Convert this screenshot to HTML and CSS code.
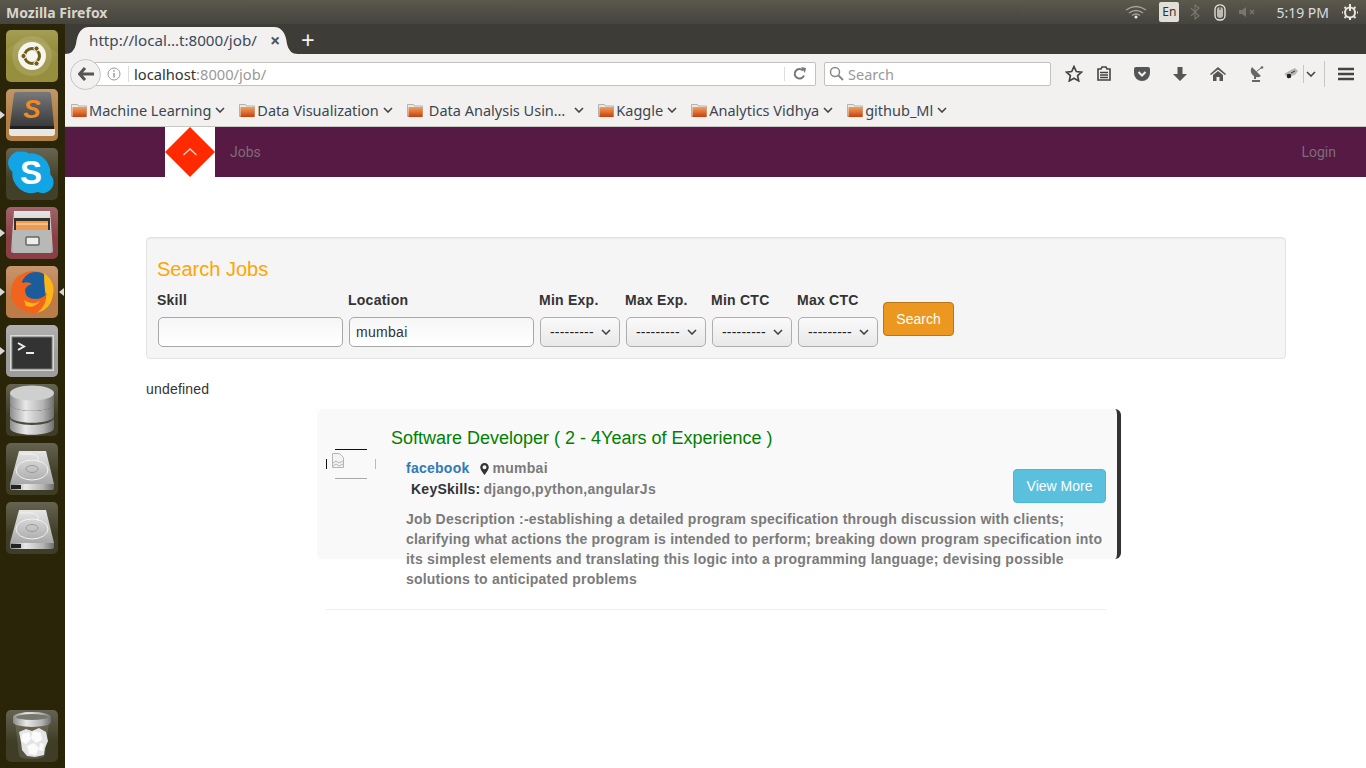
FILE: index.html
```html
<!DOCTYPE html>
<html>

<head>
    <meta charset="utf-8">
    <meta name="viewport" content="width=device-width, initial-scale=1.0">
    <title>Jobs</title>
    <link rel="stylesheet" href="styles.css">
</head>

<body>
    <svg class="svg_defs" aria-hidden="true">
        <defs>
            <linearGradient id="folder_g" x1="0" y1="0" x2="0" y2="1">
                <stop offset="0" stop-color="#f0a060" />
                <stop offset="1" stop-color="#c8400c" />
            </linearGradient>
            <linearGradient id="metal_g" x1="0" y1="0" x2="1" y2="0">
                <stop offset="0" stop-color="#8c8c8c" />
                <stop offset="0.35" stop-color="#e8e8e8" />
                <stop offset="0.75" stop-color="#b4b4b4" />
                <stop offset="1" stop-color="#6e6e6e" />
            </linearGradient>
            <linearGradient id="plate_g" x1="0" y1="0" x2="0" y2="1">
                <stop offset="0" stop-color="#e6e6e6" />
                <stop offset="1" stop-color="#a8a8a8" />
            </linearGradient>
            <linearGradient id="box_g" x1="0" y1="0" x2="0" y2="1">
                <stop offset="0" stop-color="#77787a" />
                <stop offset="1" stop-color="#3a3a3c" />
            </linearGradient>
            <symbol id="folder" viewBox="0 0 16 16">
                <path d="M0.5 2.5h6l1 1.500h8v10.500h-15z" fill="#ece9e4" stroke="#a8a49c" stroke-width="0.8" />
                <rect x="1.5" y="5" width="14" height="10" fill="url(#folder_g)" />
            </symbol>
            <symbol id="chev" viewBox="0 0 10 6">
                <path d="M1 1l4 4 4-4" fill="none" stroke="#444" stroke-width="1.6" />
            </symbol>
            <symbol id="hdd" viewBox="0 0 52 52">
                <path d="M13 8h27l8 33H4z" fill="url(#plate_g)" />
                <path d="M4 41h44v4a2 2 0 0 1-2 2H6a2 2 0 0 1-2-2z" fill="url(#metal_g)" />
                <rect x="5" y="42" width="10" height="4" fill="#222" />
                <ellipse cx="26" cy="27" rx="16" ry="10" fill="none" stroke="#f2f2f2" />
                <ellipse cx="26" cy="26" rx="6" ry="3.5" fill="none" stroke="#999" />
                <path d="M14 11h12q8 1 6 8" fill="none" stroke="#f2f2f2" />
            </symbol>
        </defs>
    </svg>

    <header class="top_bar">
        <span class="top_title">Mozilla Firefox</span>
        <div class="tray">
            <svg class="tray_wifi" width="22" height="14" viewBox="0 0 22 14">
                <path d="M1 5q10-7 20 0M4 8q7-5 14 0M7 10.5q4-3 8 0" fill="none" stroke="#a5a39b" stroke-width="1.3" />
                <circle cx="11" cy="12" r="1.5" fill="#eee" />
            </svg>
            <span class="tray_lang">En</span>
            <svg class="tray_bt" width="10" height="16" viewBox="0 0 10 16">
                <path d="M1 4l8 8-4 3V1l4 3-8 8" fill="none" stroke="#77756c" stroke-width="1.2" />
            </svg>
            <svg class="tray_mouse" width="12" height="17" viewBox="0 0 12 17">
                <rect x="1" y="1" width="10" height="15" rx="4.5" fill="none" stroke="#e8e6e0" stroke-width="1.3" />
                <rect x="3" y="3" width="6" height="11" rx="3" fill="#bdbbb4" />
                <path d="M6 1v5" stroke="#444" />
            </svg>
            <svg class="tray_sound" width="18" height="12" viewBox="0 0 18 12">
                <path d="M0 4h3l4-3v10l-4-3H0z" fill="#77756c" />
                <path d="M11 4l4 4m0-4l-4 4" stroke="#77756c" stroke-width="1.3" />
            </svg>
            <span class="tray_time">5:19 PM</span>
            <svg class="tray_power" width="16" height="16" viewBox="0 0 16 16">
                <circle cx="8" cy="8.5" r="5" fill="none" stroke="#e8e6e0" stroke-width="2" />
                <path d="M8 0v7" stroke="#e8e6e0" stroke-width="2" />
                <path d="M8 14v2M1 8.5h-1M16 8.5h-1M2.5 3l1.500 1.500M13.500 3L12 4.500M2.500 14l1.500-1.500M13.500 14L12 12.500" stroke="#e8e6e0" stroke-width="2" />
            </svg>
        </div>
    </header>

    <div class="desktop">
        <nav class="launcher">
            <div class="tile tile_ubuntu">
                <svg width="52" height="52" viewBox="0 0 52 52">
                    <path d="M0 20q26-22 52 4v28H0z" fill="#fff" opacity="0.08" />
                    <circle cx="26" cy="26" r="20" fill="#fff" opacity="0.12" />
                    <circle cx="26" cy="26" r="14" fill="#f7f5ee" />
                    <circle cx="26" cy="26" r="7.5" fill="none" stroke="#6e5e18" stroke-width="3" />
                    <circle cx="17.5" cy="26" r="2.6" fill="#6e5e18" stroke="#f7f5ee" />
                    <circle cx="30.5" cy="18.5" r="2.6" fill="#6e5e18" stroke="#f7f5ee" />
                    <circle cx="30.5" cy="33.5" r="2.6" fill="#6e5e18" stroke="#f7f5ee" />
                </svg>
            </div>
            <div class="tile tile_sublime pip_left">
                <svg width="52" height="52" viewBox="0 0 52 52">
                    <path d="M8 5q0-2 3-2h31q3 0 3 2l3 32H4z" fill="url(#box_g)" />
                    <path d="M4 37h44v3H4z" fill="#1f1f21" />
                    <path d="M3 40h46v4a3 3 0 0 1-3 3H6a3 3 0 0 1-3-3z" fill="#e9e6df" />
                    <text x="26" y="29" class="sublime_s">S</text>
                </svg>
            </div>
            <div class="tile tile_skype">
                <svg width="52" height="52" viewBox="0 0 52 52">
                    <g transform="translate(2 1) scale(0.88)">
                        <path d="M15 3a12 12 0 0 1 9 2 22 22 0 0 1 24 24 12 12 0 0 1-2 19 12 12 0 0 1-12 1A22 22 0 0 1 5 26 13 13 0 0 1 15 3z" fill="#12a5e6" />
                    </g>
                    <text x="25" y="36" class="skype_s">S</text>
                </svg>
            </div>
            <div class="tile tile_files pip_left">
                <svg width="52" height="52" viewBox="0 0 52 52">
                    <path d="M8 4h36l3 40a2 2 0 0 1-2 2H7a2 2 0 0 1-2-2z" fill="url(#plate_g)" />
                    <rect x="8" y="11" width="36" height="12" fill="#33302c" />
                    <rect x="10" y="14" width="32" height="9" fill="#ef9a4f" />
                    <path d="M10 17h32" stroke="#fbe3c4" stroke-width="1.2" />
                    <rect x="7" y="23" width="38" height="23" fill="#b8b8b6" />
                    <rect x="20" y="30" width="13" height="8" rx="1" fill="#eee" stroke="#666" stroke-width="1.5" />
                </svg>
            </div>
            <div class="tile tile_firefox pip_left">
                <svg width="52" height="52" viewBox="0 0 52 52">
                    <circle cx="27" cy="26" r="21" fill="#f1641e" />
                    <circle cx="30" cy="21" r="15" fill="#1b5d9c" />
                    <path d="M38 7q12 9 9 22-2 14-16 18 12-10 8-22-1-9-1-18z" fill="#fbb516" />
                    <path d="M5 30q-1-14 9-22-2 6 3 9 5-2 9 1-7 2-7 7 1 8 10 8 8 0 12-6-3 15-18 17Q8 45 5 30z" fill="#f1641e" />
                    <path d="M18 34q8 6 16 1-6 8-14 5z" fill="#fbb516" />
                </svg>
                <span class="pip_right"></span>
            </div>
            <div class="tile tile_terminal pip_left">
                <svg width="52" height="52" viewBox="0 0 52 52">
                    <rect x="4" y="10" width="44" height="36" fill="#d8d8d8" />
                    <rect x="6" y="12" width="40" height="32" fill="#333" stroke="#777" />
                    <path d="M12 18l6 3.500-6 3.500" fill="none" stroke="#eee" stroke-width="2" />
                    <path d="M20 28h8" stroke="#eee" stroke-width="2" />
                </svg>
            </div>
            <div class="tile tile_dark">
                <svg width="52" height="52" viewBox="0 0 52 52">
                    <path d="M4 34v10c0 9 44 9 44 0V34z" fill="url(#metal_g)" />
                    <ellipse cx="26" cy="34" rx="22" ry="7" fill="#4a4a42" />
                    <path d="M4 19v13c0 9 44 9 44 0V19z" fill="url(#metal_g)" />
                    <ellipse cx="26" cy="20" rx="22" ry="7" fill="#55554c" />
                    <path d="M4 9v11c0 9 44 9 44 0V9z" fill="url(#metal_g)" />
                    <ellipse cx="26" cy="9" rx="22" ry="7.5" fill="#cfcfcf" />
                </svg>
            </div>
            <div class="tile tile_dark">
                <svg width="52" height="52"><use href="#hdd" /></svg>
            </div>
            <div class="tile tile_dark">
                <svg width="52" height="52"><use href="#hdd" /></svg>
            </div>
            <div class="tile tile_dark tile_trash">
                <svg width="52" height="52" viewBox="0 0 52 52">
                    <path d="M9 12l4 33q0 4 13 4t13-4l4-33z" fill="#fff" opacity="0.12" />
                    <path d="M13 22l7-3 6 2 7-3 7 4 2 9-3 7-1 7-9 2-8-1-5-6-1-8z" fill="#e4e4e4" />
                    <path d="M16 24l7-2 2 7-5 5-5-3zM27 21l8 2 1 7-6 3-5-5zM21 36l7-3 5 5-3 7-7-1zM34 33l4 1-1 7-4-1z" fill="#fbfbfb" />
                    <path d="M7 7a19 5 0 0 1 38 0v5a19 5 0 0 1-38 0z" fill="url(#metal_g)" />
                    <ellipse cx="26" cy="7" rx="16" ry="3" fill="#77776e" />
                </svg>
            </div>
        </nav>

        <div class="browser">
            <div class="tab_strip">
                <div class="tab">
                    <svg class="tab_shape" width="233" height="28" viewBox="0 0 233 28">
                        <path d="M0 28q9 0 11-10 2-17 13-17h185q11 0 13 17 2 10 11 10z" fill="#f2f1ef" />
                    </svg>
                    <span class="tab_title">http://local…t:8000/job/</span>
                    <span class="tab_close">×</span>
                </div>
                <span class="tab_new">+</span>
            </div>

            <div class="nav_row">
                <div class="back_btn">
                    <svg width="16" height="14" viewBox="0 0 16 14">
                        <path d="M7 1L1.500 7 7 13M2 7h14" fill="none" stroke="#555" stroke-width="3" />
                    </svg>
                </div>
                <div class="url_box">
                    <svg class="url_info" width="14" height="14" viewBox="0 0 14 14">
                        <circle cx="7" cy="7" r="6" fill="none" stroke="#999" />
                        <path d="M7 6v4.500M7 3.200v1.600" stroke="#888" stroke-width="1.3" />
                    </svg>
                    <span class="url_text">localhost<span class="url_dim">:8000/job/</span></span>
                    <svg class="url_reload" width="16" height="14" viewBox="0 0 16 14">
                        <path d="M12 8.500A4.800 4.800 0 1 1 11 3.500" fill="none" stroke="#777" stroke-width="2" />
                        <path d="M9 0l5 1-1 5z" fill="#777" />
                    </svg>
                </div>
                <div class="search_box">
                    <svg width="15" height="15" viewBox="0 0 15 15">
                        <circle cx="6" cy="6" r="4.5" fill="none" stroke="#888" stroke-width="1.5" />
                        <path d="M9.500 9.500l4.500 4.500" stroke="#888" stroke-width="2" />
                    </svg>
                    <span>Search</span>
                </div>
                <div class="toolbar">
                    <svg class="tool_star" width="18" height="17" viewBox="0 0 18 17">
                        <path d="M9 1.500l2.300 5 5.200.6-3.900 3.500 1.100 5.300L9 13.200l-4.700 2.700 1.100-5.300L1.500 7.100l5.200-.6z" fill="none" stroke="#444" stroke-width="1.7" />
                    </svg>
                    <svg class="tool_list" width="14" height="15" viewBox="0 0 14 15">
                        <path d="M1 3h3l1-2h4l1 2h3v11H1z" fill="none" stroke="#444" stroke-width="1.6" />
                        <path d="M3 6.500h8M3 9h8M3 11.500h8" stroke="#444" stroke-width="1.4" />
                    </svg>
                    <svg class="tool_pocket" width="16" height="14" viewBox="0 0 16 14">
                        <path d="M0 2a2 2 0 0 1 2-2h12a2 2 0 0 1 2 2v4a8 8 0 0 1-16 0z" fill="#555" />
                        <path d="M4.500 5L8 8.500 11.500 5" fill="none" stroke="#f2f1ef" stroke-width="2" />
                    </svg>
                    <svg class="tool_down" width="14" height="14" viewBox="0 0 14 14">
                        <path d="M4.500 0h5v7H14l-7 7-7-7h4.500z" fill="#555" />
                    </svg>
                    <svg class="tool_home" width="16" height="14" viewBox="0 0 16 14">
                        <path d="M8 0l8 7-1 1-7-5.500L1 8 0 7z" fill="#555" />
                        <path d="M3 8l5-4 5 4v6H9.500V10h-3v4H3z" fill="#555" />
                    </svg>
                    <svg class="tool_dish" width="14" height="16" viewBox="0 0 14 16">
                        <path d="M2 1a6.500 6.500 0 0 0 9 9z" fill="#666" />
                        <path d="M6.500 5.500L11 2" stroke="#666" />
                        <circle cx="12" cy="1.500" r="1.3" fill="#666" />
                        <path d="M5 10v3" stroke="#666" stroke-width="2" />
                        <path d="M2 15h8" stroke="#666" stroke-width="2" />
                    </svg>
                    <svg class="tool_bug" width="16" height="12" viewBox="0 0 16 12">
                        <path d="M1 6l5-3 6-3 3 3-3 4-5 1-2 3-1-3z" fill="#b5b5b5" />
                        <circle cx="6" cy="8" r="2.3" fill="#222" />
                        <path d="M8 5l4-2" stroke="#333" />
                    </svg>
                    <span class="tool_sep"></span>
                    <svg class="tool_chev" width="10" height="6"><use href="#chev" /></svg>
                    <span class="tool_sep tool_sep_tall"></span>
                    <svg class="tool_menu" width="16" height="14" viewBox="0 0 16 14">
                        <path d="M0 2h16M0 7h16M0 12h16" stroke="#444" stroke-width="2.6" />
                    </svg>
                </div>
            </div>

            <div class="bookmarks">
                <div class="mark"><svg width="16" height="16"><use href="#folder" /></svg><span>Machine Learning</span><svg class="mark_chev" width="10" height="6"><use href="#chev" /></svg></div>
                <div class="mark"><svg width="16" height="16"><use href="#folder" /></svg><span>Data Visualization</span><svg class="mark_chev" width="10" height="6"><use href="#chev" /></svg></div>
                <div class="mark mark_da"><svg width="16" height="16"><use href="#folder" /></svg><span>Data Analysis Usin…</span><svg class="mark_chev" width="10" height="6"><use href="#chev" /></svg></div>
                <div class="mark"><svg width="16" height="16"><use href="#folder" /></svg><span>Kaggle</span><svg class="mark_chev" width="10" height="6"><use href="#chev" /></svg></div>
                <div class="mark"><svg width="16" height="16"><use href="#folder" /></svg><span>Analytics Vidhya</span><svg class="mark_chev" width="10" height="6"><use href="#chev" /></svg></div>
                <div class="mark"><svg width="16" height="16"><use href="#folder" /></svg><span>github_Ml</span><svg class="mark_chev" width="10" height="6"><use href="#chev" /></svg></div>
            </div>

            <div class="page">
                <div class="site_nav">
                    <div class="site_logo">
                        <svg width="50" height="50" viewBox="0 0 50 50">
                            <path d="M25 0l25 25-25 25L0 25z" fill="#ff2a00" />
                            <path d="M18.500 28L25 22l6.500 6" fill="none" stroke="#ffd9d0" stroke-width="1.3" />
                        </svg>
                    </div>
                    <a class="site_link">Jobs</a>
                    <a class="site_link site_login">Login</a>
                </div>

                <main class="content">
                    <section class="search_panel">
                        <h3>Search Jobs</h3>
                        <form class="search_form">
                            <div class="field field_text">
                                <label>Skill</label>
                                <input type="text">
                            </div>
                            <div class="field field_text">
                                <label>Location</label>
                                <input type="text" value="mumbai">
                            </div>
                            <div class="field field_select">
                                <label>Min Exp.</label>
                                <div class="fake_select"><span>---------</span><svg width="10" height="6"><use href="#chev" /></svg></div>
                            </div>
                            <div class="field field_select">
                                <label>Max Exp.</label>
                                <div class="fake_select"><span>---------</span><svg width="10" height="6"><use href="#chev" /></svg></div>
                            </div>
                            <div class="field field_select">
                                <label>Min CTC</label>
                                <div class="fake_select"><span>---------</span><svg width="10" height="6"><use href="#chev" /></svg></div>
                            </div>
                            <div class="field field_select">
                                <label>Max CTC</label>
                                <div class="fake_select"><span>---------</span><svg width="10" height="6"><use href="#chev" /></svg></div>
                            </div>
                            <button type="button" class="btn_search">Search</button>
                        </form>
                    </section>

                    <p class="undefined_note">undefined</p>

                    <section class="job_card">
                        <div class="job_logo">
                            <svg width="12" height="15" viewBox="0 0 12 15">
                                <path d="M0.5 0.5h7l4 4v10h-11z" fill="#f4f4f4" stroke="#b5b5b5" />
                                <path d="M1 10l3-2 3 2 4-2M1 13l3-2 3 2 4-2" fill="none" stroke="#b5b5b5" />
                            </svg>
                        </div>
                        <div class="job_body">
                            <h4>Software Developer ( 2 - 4Years of Experience )</h4>
                            <div class="job_info">
                                <div class="job_meta">
                                    <p class="job_line">
                                        <a class="job_company">facebook</a>
                                        <svg class="job_pin" width="9" height="12" viewBox="0 0 9 12">
                                            <path d="M4.500 0a4.300 4.300 0 0 1 4.300 4.300c0 2.700-4.300 7.700-4.300 7.700S.2 7 .2 4.300A4.300 4.300 0 0 1 4.500 0zm0 2.300a2 2 0 1 0 0 4 2 2 0 0 0 0-4z" fill="#333" />
                                        </svg>
                                        <span class="job_place">mumbai</span>
                                    </p>
                                    <p class="job_line job_skills"><b>KeySkills:</b> <span class="job_place">django,python,angularJs</span></p>
                                </div>
                                <button type="button" class="btn_more">View More</button>
                            </div>
                            <p class="job_desc">Job Description :-establishing a detailed program specification through discussion with clients; clarifying what actions the program is intended to perform; breaking down program specification into its simplest elements and translating this logic into a programming language; devising possible solutions to anticipated problems</p>
                        </div>
                    </section>

                    <hr class="job_rule">
                </main>
            </div>
        </div>
    </div>
</body>

</html>
```

FILE: styles.css
```css
/* vars */
:root {
    --tab-color: #f2f1ef;
    --strip-color: #3d3c37;
    --launcher-color: #2a2508;
    --site-color: #571a44;
    --muted: #7b7b7b;
    --ui-font: "Noto Sans", "Open Sans", sans-serif;
    --page-font: "Liberation Sans", Arial, sans-serif;
}

html,
body {
    height: 100%;
}

body {
    margin: 0;
    overflow: hidden;
    font-family: var(--page-font);
    font-size: 14px;
    color: #333;
    background: #fff;
}

.svg_defs {
    position: absolute;
    width: 0;
    height: 0;
}

svg {
    display: block;
    flex: none;
}

/* ubuntu top bar */
.top_bar {
    height: 24px;
    box-sizing: border-box;
    padding: 0 8px 0 6px;
    display: flex;
    align-items: center;
    justify-content: space-between;
    background: linear-gradient(#5b584c, #45443e);
}

.top_title {
    font-family: var(--ui-font);
    font-size: 14px;
    font-weight: 700;
    color: #d8d5cc;
}

.tray {
    display: flex;
    align-items: center;
}

.tray_lang {
    width: 20px;
    height: 20px;
    margin-left: 12px;
    border-radius: 2px;
    background: #e2dfd8;
    color: #333;
    font-family: var(--ui-font);
    font-size: 12px;
    line-height: 20px;
    text-align: center;
}

.tray_bt {
    margin-left: 11px;
}

.tray_mouse {
    margin-left: 14px;
}

.tray_sound {
    margin-left: 13px;
}

.tray_time {
    margin-left: 19px;
    font-family: var(--ui-font);
    font-size: 14px;
    color: #d8dde0;
}

.tray_power {
    margin-left: 13px;
}

.desktop {
    display: flex;
    height: 744px;
}

/* launcher */
.launcher {
    width: 65px;
    flex: none;
    box-sizing: border-box;
    padding: 6px 0 6px 6px;
    display: flex;
    flex-direction: column;
    gap: 7px;
    background: var(--launcher-color);
}

.tile {
    position: relative;
    width: 52px;
    height: 52px;
    border-radius: 5px;
    background: #3a3620;
}

.tile::before {
    content: "";
    position: absolute;
    inset: 0;
    border-radius: 5px;
    background: linear-gradient(rgba(255, 255, 255, 0.22), rgba(255, 255, 255, 0.03) 60%);
}

.tile svg {
    position: relative;
    border-radius: 5px;
}

.tile_ubuntu {
    background: #8b8226;
}

.tile_sublime {
    background: #af7a3e;
}

.tile_skype {
    background: #3d3a22;
}

.tile_files {
    background: #84393f;
}

.tile_firefox {
    background: #b87844;
}

.tile_terminal {
    background: #9a9a98;
}

.tile_dark {
    background: #3a3720;
}

.tile_trash {
    margin-top: auto;
}

.pip_left::after {
    content: "";
    position: absolute;
    left: -6px;
    top: 22px;
    border: 4px solid transparent;
    border-left: 5px solid #d8d8d8;
    border-right: 0;
}

.pip_right {
    position: absolute;
    left: 53px;
    top: 22px;
    border: 4px solid transparent;
    border-right: 5px solid #d8d8d8;
    border-left: 0;
}

.sublime_s {
    font-family: "Liberation Sans", sans-serif;
    font-size: 26px;
    font-weight: 700;
    font-style: italic;
    fill: #f08a24;
    text-anchor: middle;
}

.skype_s {
    font-family: "Liberation Sans", sans-serif;
    font-size: 33px;
    font-weight: 700;
    fill: #fff;
    text-anchor: middle;
}

/* firefox chrome */
.browser {
    flex: 1;
    min-width: 0;
    display: flex;
    flex-direction: column;
}

.tab_strip {
    height: 30px;
    flex: none;
    box-sizing: border-box;
    padding: 2px 0 0 0;
    display: flex;
    align-items: stretch;
    background: var(--strip-color);
}

.tab {
    position: relative;
    width: 233px;
    display: flex;
    align-items: center;
    font-family: var(--ui-font);
    font-size: 15.2px;
    color: #3c4a5a;
}

.tab_shape {
    position: absolute;
    inset: 0;
}

.tab_title,
.tab_close {
    position: relative;
}

.tab_title {
    margin-left: 24px;
}

.tab_close {
    margin-left: 13px;
    font-size: 18px;
    font-weight: 700;
    color: #555;
}

.tab_new {
    margin-left: 3px;
    font-family: var(--ui-font);
    font-size: 24px;
    line-height: 27px;
    color: #f2f2f2;
}

.nav_row {
    height: 39px;
    flex: none;
    box-sizing: border-box;
    display: flex;
    align-items: center;
    padding: 0 0 0 5px;
    background: var(--tab-color);
}

.back_btn {
    position: relative;
    z-index: 1;
    width: 29px;
    height: 29px;
    border: 1px solid #c8c6c2;
    border-radius: 50%;
    background: var(--tab-color);
    display: flex;
    align-items: center;
    justify-content: center;
    margin-top: 1px;
}

.url_box {
    width: 730px;
    height: 24px;
    margin-left: -15px;
    box-sizing: border-box;
    border: 1px solid #c3c1bd;
    border-left: 0;
    border-radius: 0 2px 2px 0;
    background: #fff;
    display: flex;
    align-items: center;
    padding-left: 21px;
    font-family: var(--ui-font);
    font-size: 14.7px;
    color: #333;
}

.url_info {
    margin-right: 7px;
}

.url_text {
    flex: 1;
    border-left: 1px solid #ddd;
    padding-left: 5px;
    line-height: 16px;
}

.url_dim {
    color: #999;
}

.url_reload {
    box-sizing: content-box;
    padding: 0 7px 0 7px;
    height: 14px;
    border-left: 1px solid #ddd;
}

.search_box {
    width: 227px;
    height: 24px;
    margin-left: 8px;
    box-sizing: border-box;
    border: 1px solid #c3c1bd;
    border-radius: 2px;
    background: #fff;
    display: flex;
    align-items: center;
    gap: 4px;
    padding-left: 4px;
    font-family: var(--ui-font);
    font-size: 14.5px;
    color: #999;
}

.toolbar {
    display: flex;
    align-items: center;
    margin-left: 14px;
}

.tool_list {
    margin-left: 14px;
}

.tool_pocket,
.tool_down,
.tool_home {
    margin-left: 23px;
}

.tool_dish {
    margin-left: 24px;
}

.tool_bug {
    margin-left: 19px;
}

.tool_sep {
    width: 1px;
    height: 18px;
    margin-left: 4px;
    background: #c8c6c2;
}

.tool_chev {
    margin-left: 2px;
}

.tool_sep_tall {
    height: 26px;
    margin-left: 8px;
}

.tool_menu {
    margin-left: 13px;
}

.bookmarks {
    height: 34px;
    flex: none;
    box-sizing: border-box;
    padding: 1px 0 0 6px;
    display: flex;
    align-items: center;
    gap: 14px;
    background: var(--tab-color);
    border-bottom: 1px solid #c9c7c3;
    font-family: var(--ui-font);
    font-size: 14.5px;
    color: #3c4650;
}

.mark {
    display: flex;
    align-items: center;
    gap: 2px;
}

.mark_chev {
    margin-left: 2px;
}

.mark_da span {
    margin-left: 4px;
}

.mark_da .mark_chev {
    margin-left: 7px;
}

/* the job site */
.page {
    flex: 1;
    min-height: 0;
    background: #fff;
}

.site_nav {
    height: 50px;
    display: flex;
    align-items: center;
    padding-left: 100px;
    padding-right: 30px;
    background: var(--site-color);
    font-family: Roboto, var(--page-font);
    font-size: 14px;
}

.site_logo {
    width: 50px;
    height: 50px;
    background: #fff;
}

.site_link {
    margin-left: 15px;
    color: #7d6c78;
}

.site_login {
    margin-left: auto;
}

.content {
    width: 1140px;
    margin: 60px 0 0 81px;
}

.search_panel {
    height: 122px;
    box-sizing: border-box;
    padding: 0 10px;
    border: 1px solid #e3e3e3;
    border-radius: 4px;
    background: #f5f5f5;
    box-shadow: inset 0 1px 1px rgba(0, 0, 0, 0.05);
}

.search_panel h3 {
    margin: 20px 0 0;
    font-size: 20px;
    font-weight: 400;
    line-height: 22px;
    color: #ffa500;
}

.search_form {
    display: flex;
    align-items: flex-start;
}

.field label {
    display: block;
    font-weight: 700;
    line-height: 20px;
    margin-top: 10px;
    letter-spacing: 0.25px;
    color: #333;
}

.field_text {
    width: 191px;
}

.field_select {
    width: 86px;
}

.field input {
    display: block;
    width: 185px;
    height: 30px;
    margin: 7px 0 0 1px;
    box-sizing: border-box;
    padding: 0 6px;
    border: 1px solid #a8a8a8;
    border-radius: 5px;
    background: linear-gradient(#f6f6f6, #fff);
    font-family: var(--page-font);
    font-size: 14px;
    letter-spacing: 0.3px;
    color: #333;
}

.fake_select {
    width: 80px;
    height: 30px;
    margin: 7px 0 0 1px;
    box-sizing: border-box;
    padding: 0 8px 0 9px;
    border: 1px solid #aeaeae;
    border-radius: 5px;
    background: linear-gradient(#fafafa, #e8e8e8);
    display: flex;
    align-items: center;
    justify-content: space-between;
    color: #222;
    font-size: 14px;
    letter-spacing: 0.2px;
}

.btn_search {
    width: 71px;
    height: 34px;
    margin: 22px 0 0 0;
    padding: 0;
    border: 1px solid #b5771a;
    border-radius: 4px;
    background: #ec971f;
    color: #fff;
    font-family: var(--page-font);
    font-size: 14px;
}

.undefined_note {
    margin: 22px 0 0;
    line-height: 16px;
    letter-spacing: 0.2px;
    color: #333;
}

.job_card {
    box-sizing: border-box;
    width: 804px;
    height: 150px;
    margin: 12px 0 0 171px;
    padding: 0 11px 0 9px;
    display: flex;
    align-items: flex-start;
    background: #f9f9f9;
    border-right: 4px solid #333;
    border-radius: 6px;
}

.job_logo {
    width: 50px;
    height: 30px;
    flex: none;
    margin-top: 40px;
    box-sizing: border-box;
    padding: 4px 0 0 6px;
    background:
        linear-gradient(#111, #111) center top / 32px 1px no-repeat,
        linear-gradient(#aaa, #aaa) center bottom / 32px 1px no-repeat,
        linear-gradient(#111, #111) left 10px / 1px 10px no-repeat,
        linear-gradient(#bbb, #bbb) right 10px / 1px 10px no-repeat;
}

.job_body {
    flex: 1;
    min-width: 0;
    margin-left: 15px;
}

.job_body h4 {
    margin: 19px 0 0;
    font-size: 18px;
    font-weight: 400;
    line-height: 20px;
    color: green;
}

.job_info {
    display: flex;
    justify-content: space-between;
    align-items: flex-start;
    height: 51px;
    margin-top: 10px;
    padding-left: 15px;
}

.job_line {
    margin: 0;
    font-weight: 700;
    line-height: 21px;
    letter-spacing: 0.26px;
    display: flex;
    align-items: center;
}

.job_company {
    color: #337ab7;
}

.job_pin {
    margin: 0 4px 0 10px;
}

.job_place {
    color: var(--muted);
}

.job_skills {
    padding-left: 5px;
    gap: 3px;
}

.btn_more {
    width: 93px;
    height: 34px;
    margin-top: 11px;
    padding: 0;
    border: 1px solid #46b8da;
    border-radius: 4px;
    background: #5bc0de;
    color: #fff;
    font-family: var(--page-font);
    font-size: 14px;
}

.job_desc {
    margin: 0 0 0 15px;
    font-weight: 700;
    line-height: 20px;
    letter-spacing: 0.21px;
    color: var(--muted);
}

.job_rule {
    width: 780px;
    height: 1px;
    margin: 50px 0 0 180px;
    border: 0;
    background: #eee;
}
```
